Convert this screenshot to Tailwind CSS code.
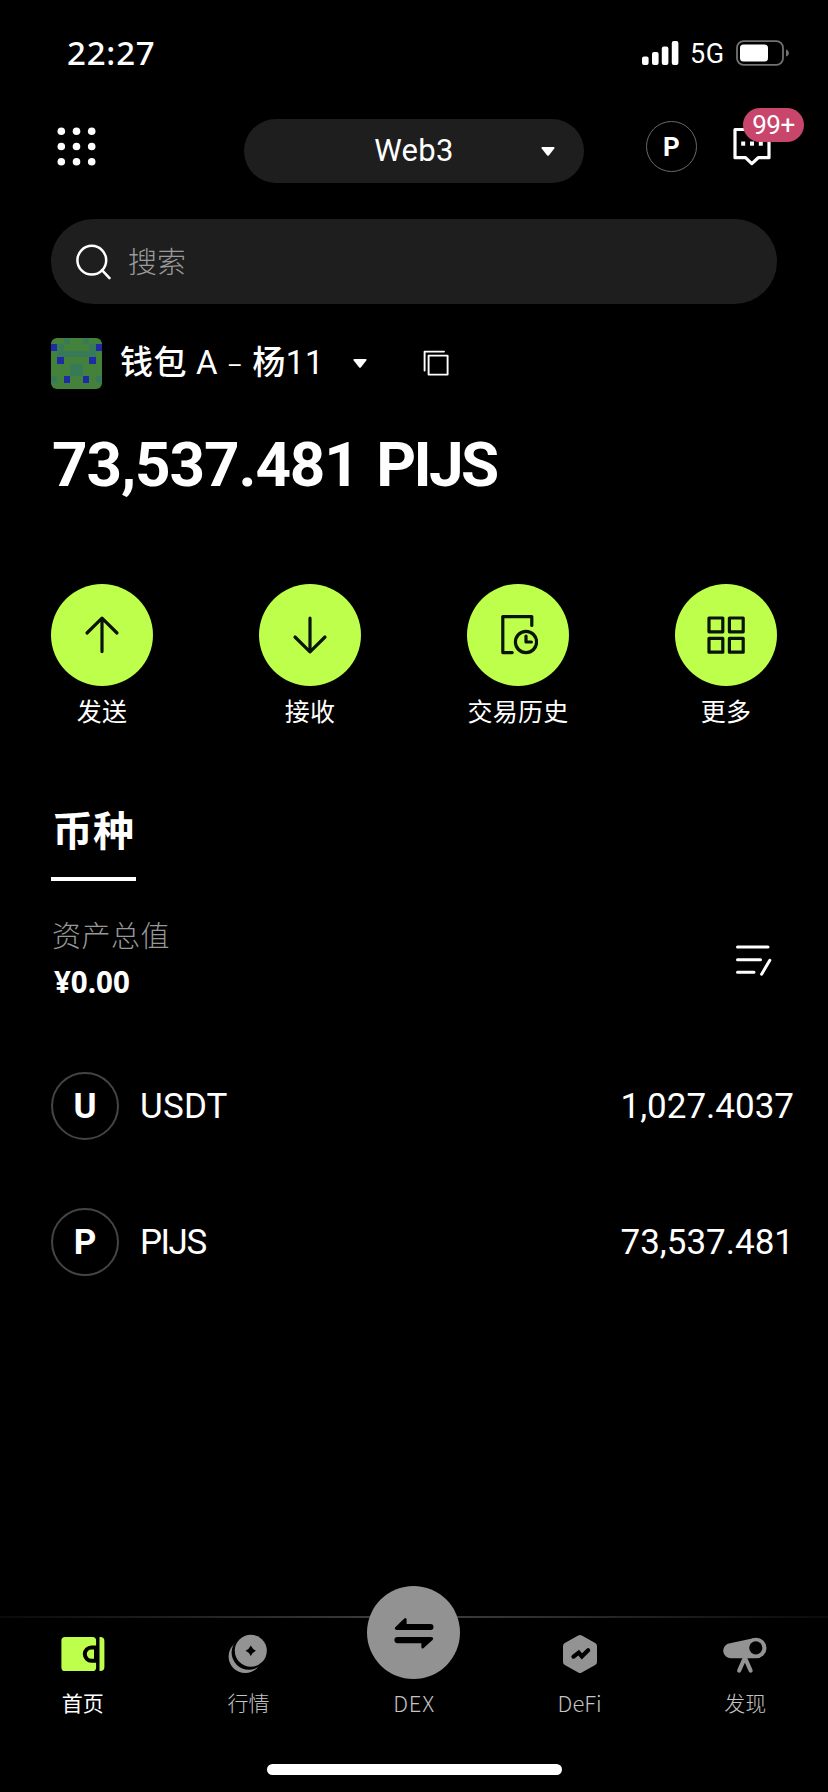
<!DOCTYPE html>
<html lang="zh-CN">
<head>
<meta charset="utf-8">
<title>Web3 钱包</title>
<script src="https://cdn.jsdelivr.net/npm/@tailwindcss/browser@4"></script>
</head>
<body class="bg-black">
<div class="flex h-[1792px] w-[828px] flex-col overflow-hidden bg-black font-['Roboto','Noto_Sans_CJK_SC',sans-serif] text-white">

  <!-- Status bar -->
  <div class="flex h-[106px] shrink-0 items-center justify-between pr-[38px] pl-[67px]">
    <span class="font-['Noto_Sans','Noto_Sans_CJK_SC',sans-serif] text-[33px] leading-[40px] font-medium tracking-[0.8px]">22:27</span>
    <div class="flex items-center">
      <svg class="h-[24px] w-[37px]" viewBox="0 0 37 24" fill="#fff"><rect x="0" y="15.5" width="6.6" height="8.5" rx="2"/><rect x="10" y="11" width="6.6" height="13" rx="2"/><rect x="19.8" y="5.5" width="6.6" height="18.5" rx="2"/><rect x="29.8" y="0" width="6.6" height="24" rx="2"/></svg>
      <span class="mt-[2px] ml-[11px] w-[46px] text-[27px] leading-[30px] tracking-[0.5px]">5G</span>
      <svg class="h-[26px] w-[54px]" viewBox="0 0 54 26"><rect x="1" y="1.2" width="46" height="23.6" rx="6.5" fill="none" stroke="#727272" stroke-width="1.8"/><rect x="4" y="4.5" width="28" height="17" rx="3.5" fill="#fff"/><path d="M50 9.5c3.8 1 3.8 6 0 7z" fill="#727272"/></svg>
    </div>
  </div>

  <!-- Header -->
  <div class="grid h-[94px] shrink-0 grid-cols-[193px_340px_1fr] pl-[51px]">
    <svg class="mt-[21px] ml-[5px] h-[40px] w-[40px]" viewBox="0 0 40 40" fill="#fff"><circle cx="5.3" cy="4.2" r="3.8"/><circle cx="20.5" cy="4.2" r="3.8"/><circle cx="35.7" cy="4.2" r="3.8"/><circle cx="5.3" cy="19.5" r="3.8"/><circle cx="20.5" cy="19.5" r="3.8"/><circle cx="35.7" cy="19.5" r="3.8"/><circle cx="5.3" cy="34.8" r="3.8"/><circle cx="20.5" cy="34.8" r="3.8"/><circle cx="35.7" cy="34.8" r="3.8"/></svg>
    <div class="mt-[13px] grid h-[64px] grid-cols-[1fr_auto_1fr] items-center rounded-full bg-[#1e1e1e]">
      <span></span>
      <span class="text-[31px] leading-[40px] tracking-[0.3px]">Web3</span>
      <svg class="mr-[29px] h-[9px] w-[14px] justify-self-end" viewBox="0 0 14 9"><path d="M1.2 0h11.6q1.2.2.5 1.4L8 8.3q-1 1-2 0L.7 1.4Q0 .2 1.2 0z" fill="#fff"/></svg>
    </div>
    <div class="flex">
      <div class="mt-[15px] ml-[62px] flex size-[51px] items-center justify-center rounded-full border border-[#6a6a6a] pt-[1px] text-[26px] font-bold">P</div>
      <div class="relative mt-[21px] ml-[36px] h-[40px] w-[38px]">
        <svg class="h-[40px] w-[38px]" viewBox="0 0 38 40"><path d="M2 2.5h34v28.2H25.2L18.8 36.6l-6.3-5.9H2z" fill="none" stroke="#fff" stroke-width="3.2" stroke-linejoin="round"/><g fill="#fff"><rect x="8.2" y="14.5" width="4" height="4.2"/><rect x="17" y="14.5" width="4" height="4.2"/><rect x="25.8" y="14.5" width="4" height="4.2"/></g></svg>
        <span class="absolute -top-[19px] left-[10px] flex h-[34px] w-[61px] items-center justify-center rounded-full bg-[#c8456b] text-[26px] leading-none tracking-[-0.5px]">99+</span>
      </div>
    </div>
  </div>

  <!-- Search -->
  <div class="mx-[51px] mt-[19px] flex h-[85px] shrink-0 items-center rounded-full bg-[#1e1e1e] pl-[25px]">
    <svg class="h-[36px] w-[36px]" viewBox="0 0 36 36" fill="none" stroke="#fff" stroke-width="2.5" stroke-linecap="round"><circle cx="15.8" cy="16.2" r="14.4"/><path d="M26 26.2l7.5 8"/></svg>
    <span class="mt-[2px] ml-[16px] text-[29px] leading-[40px] font-light text-[#9a9a9a]">搜索</span>
  </div>

  <!-- Wallet selector -->
  <div class="mx-[51px] mt-[33px] flex h-[52px] shrink-0 items-center">
    <svg class="size-[51px] rounded-[6px]" viewBox="0 0 8 8" shape-rendering="crispEdges"><rect width="8" height="8" fill="#44823b"/><path d="M2 0h1v1H2zM5 0h1v1H5zM1 1h1v1H1zM6 1h1v1H6zM1 2h6v1H5v0H3v0H1zM3 4h2v2H3zM0 6h1v1H0zM7 6h1v1H7z" fill="#367a57"/><path d="M0 1h1v1H0zM7 1h1v1H7zM1 3h1v1H1zM6 3h1v1H6zM2 6h1v1H2zM5 6h1v1H5z" fill="#1f2ba6"/></svg>
    <span class="mt-[3px] ml-[18px] w-[233px] text-[33px] leading-[44px] font-medium tracking-[0.6px] whitespace-nowrap">钱包 <span class="font-normal">A</span><span class="inline-block w-[34px] text-center text-[24px] font-normal">–</span>杨<span class="font-normal tracking-[0.8px]">11</span></span>
    <svg class="h-[9px] w-[14px] shrink-0" viewBox="0 0 14 9"><path d="M1.2 0h11.6q1.2.2.5 1.4L8 8.3q-1 1-2 0L.7 1.4Q0 .2 1.2 0z" fill="#fff"/></svg>
    <svg class="ml-[56px] h-[26px] w-[26px]" viewBox="0 0 26 26" fill="none" stroke="#fff" stroke-width="1.9" stroke-linecap="round" stroke-linejoin="round"><path d="M1.6 20.5V1.6H21"/><rect x="5.6" y="5.6" width="19" height="19"/></svg>
  </div>
  <div class="mt-[41px] ml-[52px] h-[69px] shrink-0 text-[62px] leading-[70px] font-bold tracking-[-1.1px] whitespace-nowrap">73,537.481 <span class="ml-[3px] tracking-[-2.6px]">PIJS</span></div>

  <!-- Actions -->
  <div class="mx-[51px] mt-[85px] flex h-[144px] shrink-0 justify-between">
    <div class="flex w-[102px] flex-col items-center">
      <div class="flex size-[102px] shrink-0 items-center justify-center rounded-full bg-[#beff4b]">
        <svg class="size-[40px]" viewBox="0 0 40 40" fill="none" stroke="#08140a" stroke-width="3.2" stroke-linecap="round" stroke-linejoin="round"><path d="M20 36.6V3.2M5 18L20 3.2 35 18"/></svg>
      </div>
      <span class="mt-[10px] text-[25px] leading-[34px] tracking-[0.3px] whitespace-nowrap">发送</span>
    </div>
    <div class="flex w-[102px] flex-col items-center">
      <div class="flex size-[102px] shrink-0 items-center justify-center rounded-full bg-[#beff4b]">
        <svg class="size-[40px]" viewBox="0 0 40 40" fill="none" stroke="#08140a" stroke-width="3.2" stroke-linecap="round" stroke-linejoin="round"><path d="M20 3.2v33.6M5 22l15 14.8L35 22"/></svg>
      </div>
      <span class="mt-[10px] text-[25px] leading-[34px] tracking-[0.3px] whitespace-nowrap">接收</span>
    </div>
    <div class="flex w-[102px] flex-col items-center">
      <div class="flex size-[102px] shrink-0 items-center justify-center rounded-full bg-[#beff4b]">
        <svg class="size-[40px]" viewBox="0 0 40 40" fill="none" stroke="#08140a" stroke-width="3.2" stroke-linecap="round" stroke-linejoin="round"><path d="M33.8 10.5V1.6H4.8v36h9.4"/><circle cx="28" cy="27" r="10.6"/><path d="M28 21v6h5.4"/></svg>
      </div>
      <span class="mt-[10px] text-[25px] leading-[34px] tracking-[0.3px] whitespace-nowrap">交易历史</span>
    </div>
    <div class="flex w-[102px] flex-col items-center">
      <div class="flex size-[102px] shrink-0 items-center justify-center rounded-full bg-[#beff4b]">
        <svg class="size-[40px]" viewBox="0 0 40 40" fill="none" stroke="#08140a" stroke-width="3.2" stroke-linejoin="round"><rect x="3" y="3" width="13.8" height="13.8"/><rect x="23.4" y="3" width="13.8" height="13.8"/><rect x="3" y="23.4" width="13.8" height="13.8"/><rect x="23.4" y="23.4" width="13.8" height="13.8"/></svg>
      </div>
      <span class="mt-[10px] text-[25px] leading-[34px] tracking-[0.3px] whitespace-nowrap">更多</span>
    </div>
  </div>

  <!-- Token tab -->
  <div class="mt-[72px] ml-[51px] h-[81px] w-[85px] shrink-0 border-b-4 border-white pt-[4px]">
    <span class="block pl-[1px] text-[41px] leading-[56px] font-bold whitespace-nowrap">币种</span>
  </div>

  <!-- Total value -->
  <div class="mt-[31px] mr-[56px] ml-[51px] flex h-[104px] shrink-0 justify-between">
    <div class="flex flex-col pt-[3px]">
      <span class="pl-[1px] text-[29px] leading-[44px] font-light tracking-[0.5px] text-[#989898]">资产总值</span>
      <span class="mt-[1px] pl-[3px] font-['Noto_Sans',sans-serif] text-[29.5px] leading-[44px] font-bold">¥0.00</span>
    </div>
    <svg class="mt-[32px] h-[34px] w-[37px]" viewBox="0 0 37 34" fill="none" stroke="#fff" stroke-width="3" stroke-linecap="round"><path d="M2.500 3H33M2.500 15.700H25.500M2.500 28.300H19M34.800 16.300L26.600 30.200"/></svg>
  </div>

  <!-- Tokens -->
  <div class="mt-[56px] flex h-[68px] shrink-0 items-center pr-[34px] pl-[51px]">
    <div class="flex size-[68px] items-center justify-center rounded-full border-2 border-[#444] pt-[1px] text-[35px] leading-none font-bold">U</div>
    <span class="mt-[2px] ml-[21px] text-[35px] leading-[40px] tracking-[0.2px]">USDT</span>
    <span class="mt-[2px] ml-auto text-[35px] leading-[40px]">1,027.4037</span>
  </div>
  <div class="mt-[68px] flex h-[68px] shrink-0 items-center pr-[34px] pl-[51px]">
    <div class="flex size-[68px] items-center justify-center rounded-full border-2 border-[#444] pt-[1px] text-[35px] leading-none font-bold">P</div>
    <span class="mt-[2px] ml-[21px] text-[35px] leading-[40px] tracking-[-1.5px]">PIJS</span>
    <span class="mt-[2px] ml-auto text-[35px] leading-[40px]">73,537.481</span>
  </div>

  <!-- Bottom navigation -->
  <div class="mt-auto flex h-[176px] shrink-0 flex-col items-center">
    <div class="h-[2px] w-full bg-linear-to-r from-[#0a0a0a] via-[#404040] to-[#0a0a0a]"></div>
    <div class="grid h-[146px] w-full shrink-0 grid-cols-5 font-['Noto_Sans_CJK_SC',sans-serif] text-[21px] leading-[30px] font-light text-[#c4c4c4]">
      <div class="flex flex-col items-center pt-[16px]">
        <svg class="h-[40px] w-[44px]" viewBox="0 0 44 40"><path d="M4 3h27.500a3.600 3.600 0 0 1 3.600 3.600v26.800A3.600 3.600 0 0 1 31.500 37H4a3.600 3.600 0 0 1-3.600-3.600V6.600A3.600 3.600 0 0 1 4 3z" fill="#beff4b"/><path d="M36.500 13.400H30.500a6.700 6.700 0 0 0 0 13.400h6" fill="none" stroke="#000" stroke-width="4"/><path d="M34.500 14v12.500" stroke="#000" stroke-width="3"/><path d="M38.500 3h.9a4 4 0 0 1 4 4v26a4 4 0 0 1-4 4h-.9z" fill="#beff4b"/></svg>
        <span class="mt-[13px] font-normal text-white">首页</span>
      </div>
      <div class="flex flex-col items-center pt-[16px]">
        <svg class="h-[40px] w-[40px]" viewBox="0 0 40 40"><circle cx="17.200" cy="22.400" r="16.600" fill="#939393"/><circle cx="20.800" cy="18.500" r="17.200" fill="#000"/><circle cx="22.800" cy="16.800" r="16" fill="#939393"/><path d="M22.800 11.600q1.600 3.600 5.200 5.200-3.600 1.600-5.200 5.200-1.600-3.600-5.200-5.200 3.600-1.600 5.200-5.200z" fill="#000"/></svg>
        <span class="mt-[13px]">行情</span>
      </div>
      <div class="relative flex flex-col items-center pt-[69px]">
        <div class="absolute -top-[32px] flex size-[93px] items-center justify-center rounded-full bg-[#929292]">
          <svg class="h-[34px] w-[40px]" viewBox="0 0 40 34"><path d="M10.300 2.500Q12.300 1 12.600 3.500V8H36.500a3 3 0 0 1 0 6H3Q-.5 13.500 1.500 11zM29.700 32Q27.700 33.500 27.400 31V27.200H3.500a3 3 0 0 1 0-6.200H37Q40.500 21.300 38.500 24z" fill="#000"/></svg>
        </div>
        <span class="text-[22px] tracking-[0.8px]">DEX</span>
      </div>
      <div class="flex flex-col items-center pt-[16px]">
        <svg class="h-[40px] w-[36px]" viewBox="0 0 36 40"><path d="M16.200 1.500q1.800-1 3.600 0L33.200 9q1.800 1 1.800 3v16q0 2-1.800 3l-13.400 7.500q-1.800 1-3.600 0L2.800 31Q1 30 1 28V12q0-2 1.800-3z" fill="#939393"/><path d="M11.500 22.600l5.200-4 3.200 3.800 6.200-6.200" fill="none" stroke="#000" stroke-width="4.200" stroke-linecap="round" stroke-linejoin="miter"/></svg>
        <span class="mt-[13px] text-[22px]">DeFi</span>
      </div>
      <div class="flex flex-col items-center pt-[16px]">
        <svg class="h-[40px] w-[44px]" viewBox="0 0 44 40"><path d="M7 9.200L31.500 4V24.200H8.500A7.500 7.500 0 0 1 7 9.200z" fill="#939393"/><circle cx="33.200" cy="14" r="10.300" fill="#939393"/><circle cx="32.800" cy="13.800" r="6.600" fill="#000"/><path d="M21.500 24.500l-5.300 12M22.300 24.500l5.300 12" stroke="#939393" stroke-width="4.200" stroke-linecap="round"/></svg>
        <span class="mt-[13px]">发现</span>
      </div>
    </div>
    <div class="h-[11px] w-[295px] rounded-full bg-white"></div>
  </div>
</div>
</body>
</html>
